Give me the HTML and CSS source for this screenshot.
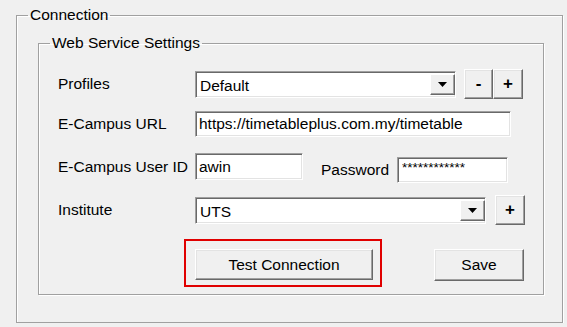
FILE: index.html
```html
<!DOCTYPE html>
<html>
<head>
  <meta charset="UTF-8">
  <title>Connection</title>
  <link rel="stylesheet" href="styles.css">
</head>
<body>
  <div class="window">
    <fieldset class="group group-outer">
      <legend>Connection</legend>

      <fieldset class="group group-inner">
        <legend>Web Service Settings</legend>

        <div class="row row-profiles">
          <label class="field-label">Profiles</label>
          <div class="combo combo-profiles">
            <span class="combo-text">Default</span>
            <span class="combo-arrow">
              <svg width="9" height="5" viewBox="0 0 9 5"><path d="M0 0H9L4.5 5Z" fill="#000"/></svg>
            </span>
          </div>
          <button class="btn btn-small btn-minus">-</button>
          <button class="btn btn-small">+</button>
        </div>

        <div class="row row-url">
          <label class="field-label">E-Campus URL</label>
          <input type="text" class="textbox textbox-url" value="https://timetableplus.com.my/timetable">
        </div>

        <div class="row row-user">
          <label class="field-label">E-Campus User ID</label>
          <input type="text" class="textbox textbox-user" value="awin">
          <div class="password-group">
            <label class="password-label">Password</label>
            <input type="text" class="textbox textbox-password" value="************">
          </div>
        </div>

        <div class="row row-institute">
          <label class="field-label">Institute</label>
          <div class="combo combo-institute">
            <span class="combo-text">UTS</span>
            <span class="combo-arrow">
              <svg width="9" height="5" viewBox="0 0 9 5"><path d="M0 0H9L4.5 5Z" fill="#000"/></svg>
            </span>
          </div>
          <button class="btn btn-small">+</button>
        </div>

        <div class="row row-actions">
          <div class="highlight">
            <button class="btn btn-test">Test Connection</button>
          </div>
          <button class="btn btn-save">Save</button>
        </div>
      </fieldset>
    </fieldset>
  </div>
</body>
</html>
```

FILE: styles.css
```css
body {
  margin: 0;
  background-color: #f0f0f0;
  font-family: "Liberation Sans", Arial, sans-serif;
  font-size: 15.5px;
  color: #000;
}

.window {
  padding: 6px 0 0 16px;
}

/* etched group boxes */
.group {
  margin: 0;
  border: 1px solid #a0a0a0;
  box-shadow: inset 1px 1px 0 #fff, 1px 1px 0 #fff;
  box-sizing: border-box;
}

.group legend {
  padding: 0 2px;
  margin-left: 11px;
  line-height: 18px;
}

.group-outer {
  width: 547px;
  padding: 10px 0 27px 0;
}

.group-inner {
  width: 506px;
  margin-left: 21px;
  padding: 17px 0 7px 19px;
}

.group-inner legend {
  margin-left: -8px;
}

.row {
  display: flex;
  align-items: center;
}

.field-label {
  width: 137px;
  flex: none;
}

.row-profiles {
  height: 30px;
}

.row-url {
  height: 26px;
  margin-top: 12px;
}

.row-user {
  height: 27px;
  margin-top: 16px;
  align-items: flex-start;
}

.row-user .field-label {
  line-height: 27px;
}

.row-institute {
  height: 30px;
  margin-top: 15px;
}

.row-actions {
  margin-top: 14px;
  align-items: flex-start;
}

/* sunken fields */
.textbox, .combo {
  box-sizing: border-box;
  border: 1px solid;
  border-color: #a0a0a0 #fff #fff #a0a0a0;
  box-shadow: inset 1px 1px 0 #696969, inset -1px -1px 0 #e3e3e3;
  background: #fff;
  font-family: inherit;
  font-size: 15.5px;
  color: #000;
}

.textbox {
  height: 26px;
  padding: 0 0 0 3px;
  margin: 0;
  outline: none;
}

.textbox-url {
  width: 316px;
}

.textbox-user {
  width: 108px;
  height: 27px;
}

.password-group {
  display: flex;
  align-items: center;
  margin: 4px 0 0 18px;
}

.password-label {
  width: 76px;
}

.textbox-password {
  width: 111px;
  font-size: 13.5px;
  padding-left: 4px;
  padding-bottom: 6px;
}

.combo {
  display: flex;
  height: 27px;
  padding: 2px 0 2px 0;
}

.combo-profiles {
  width: 261px;
}

.combo-institute {
  width: 291px;
}

.combo-text {
  flex: 1;
  padding-left: 4px;
  line-height: 23px;
}

.combo-arrow {
  width: 25px;
  box-sizing: border-box;
  display: flex;
  align-items: center;
  justify-content: center;
  background: #f0f0f0;
  border: 1px solid;
  border-color: #fff #696969 #696969 #fff;
  box-shadow: inset -1px -1px 0 #a0a0a0;
}

/* raised buttons */
.btn {
  box-sizing: border-box;
  margin: 0;
  padding: 0;
  background: #f0f0f0;
  border: 1px solid;
  border-color: #fff #696969 #696969 #fff;
  box-shadow: inset -1px -1px 0 #a0a0a0, inset 1px 1px 0 #e3e3e3;
  font-family: inherit;
  font-size: 15.5px;
  color: #000;
}

.btn-small {
  width: 30px;
  height: 30px;
  font-weight: bold;
  font-size: 17px;
  line-height: 26px;
}

.combo-profiles + .btn-small {
  margin-left: 8px;
  width: 29px;
}

.combo-institute + .btn-small {
  margin-left: 9px;
}

.btn-test {
  display: block;
  width: 178px;
  height: 31px;
}

.btn-save {
  width: 90px;
  height: 32px;
  margin: 10px 0 0 52px;
}

/* red annotation frame */
.highlight {
  margin-left: 126px;
  padding: 8px 7px 5px 9px;
  border: 2px solid #e00000;
}
```
